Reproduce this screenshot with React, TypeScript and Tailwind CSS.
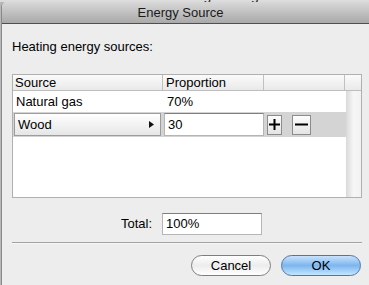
import React from "react";

const font = { fontFamily: '"Lucida Grande", "Liberation Sans", Arial, sans-serif' };

export default function App() {
  return (
    <div className="relative w-[369px] h-[285px] overflow-hidden bg-[#b8b8b8] text-[13px] text-black" style={font}>
      {/* background window edge */}
      <div className="h-[2px] overflow-hidden bg-[#dcdcdc] flex justify-center">
        <div className="-mt-[12px] pl-[60px] text-[14px] leading-[14px] text-[#222]">Heating Settings</div>
      </div>
      <div className="ml-[1px] w-[368px] h-[283px] border-l border-[#8a8a8a] flex flex-col bg-[#ededed] rounded-tl-[5px] overflow-hidden">
        {/* title bar */}
        <div className="h-[22px] shrink-0 border-b border-[#4f4f4f] bg-gradient-to-b from-[#d8d8d8] to-[#a9a9a9] flex items-center justify-center">
          <span className="leading-[16px] text-[#1a1a1a] pr-[10px]">Energy Source</span>
        </div>
        {/* body */}
        <div className="flex flex-col pl-[10px] w-[361px]">
          <div className="pt-[15px] leading-[16px]">Heating energy sources:</div>
          {/* table */}
          <div className="mt-[19px] h-[124px] w-[350px] border border-[#b0b0b0] bg-white flex flex-col">
            <div className="h-[16px] shrink-0 border-b border-[#bdbdbd] bg-gradient-to-b from-[#fbfbfb] to-[#e9e9e9] flex leading-[15px]">
              <div className="w-[150px] border-r border-[#c0c0c0] pl-[2px]">Source</div>
              <div className="w-[101px] border-r border-[#c0c0c0] pl-[3px]">Proportion</div>
              <div className="w-[81px] border-r border-[#c0c0c0]"></div>
              <div className="flex-1"></div>
            </div>
            <div className="flex flex-1">
              <div className="w-[333px] flex flex-col">
                <div className="h-[21px] flex items-center">
                  <div className="w-[151px] pl-[3px] leading-[16px]">Natural gas</div>
                  <div className="pl-[3px] leading-[16px]">70%</div>
                </div>
                <div className="h-[25px] bg-[#d4d4d4] flex items-center">
                  <div className="ml-[1px] w-[147px] h-[23px] border border-[#9c9c9c] bg-gradient-to-b from-[#ffffff] to-[#e6e6e6] flex items-center justify-between pl-[3px] pr-[6px]">
                    <span className="leading-[16px]">Wood</span>
                    <svg width="5" height="7" viewBox="0 0 5 7"><path d="M0 0 L5 3.5 L0 7 Z" fill="#111" /></svg>
                  </div>
                  <div className="ml-[3px] w-[100px] h-[23px] bg-white border border-[#b5b5b5] border-t-[#7e7e7e] flex items-center pl-[3px]">
                    <span className="leading-[16px]">30</span>
                  </div>
                  <div className="ml-[3px] w-[15px] h-[20px] border border-[#8c8c8c] bg-gradient-to-b from-[#fdfdfd] to-[#e4e4e4] flex items-center justify-center">
                    <svg width="11" height="11" viewBox="0 0 11 11"><path d="M5.5 0 V11 M0 5.5 H11" stroke="#000" strokeWidth="2" /></svg>
                  </div>
                  <div className="ml-[10px] w-[19px] h-[20px] border border-[#8c8c8c] bg-gradient-to-b from-[#fdfdfd] to-[#e4e4e4] flex items-center justify-center">
                    <svg width="13" height="3" viewBox="0 0 13 3"><path d="M0 1.5 H13" stroke="#000" strokeWidth="2" /></svg>
                  </div>
                </div>
              </div>
              <div className="flex-1 bg-gradient-to-r from-[#d9d9d9] via-[#f6f6f6] to-[#f2f2f2]"></div>
            </div>
          </div>
          {/* total */}
          <div className="mt-[15px] flex items-center h-[22px]">
            <div className="w-[150px] text-right leading-[16px] pr-[10px]">Total:</div>
            <div className="w-[100px] h-[22px] bg-white border border-[#b5b5b5] border-t-[#7e7e7e] flex items-center pl-[3px]">
              <span className="leading-[16px]">100%</span>
            </div>
          </div>
          <div className="mt-[7px] h-[2px] w-[350px] border-t border-[#a2a2a2] border-b border-b-[#f7f7f7]"></div>
          {/* buttons */}
          <div className="mt-[11px] flex justify-end w-[350px] gap-[10px] pr-[1px]">
            <div className="w-[80px] h-[21px] rounded-full border border-[#7e7e7e] bg-gradient-to-b from-[#ffffff] via-[#ececec] to-[#ffffff] flex items-center justify-center">
              <span className="leading-[16px]">Cancel</span>
            </div>
            <div className="w-[80px] h-[21px] rounded-full border border-[#4f77a6] bg-gradient-to-b from-[#c9e2fb] via-[#7db6ef] to-[#c3e6ff] flex items-center justify-center">
              <span className="leading-[16px]">OK</span>
            </div>
          </div>
        </div>
      </div>
    </div>
  );
}
